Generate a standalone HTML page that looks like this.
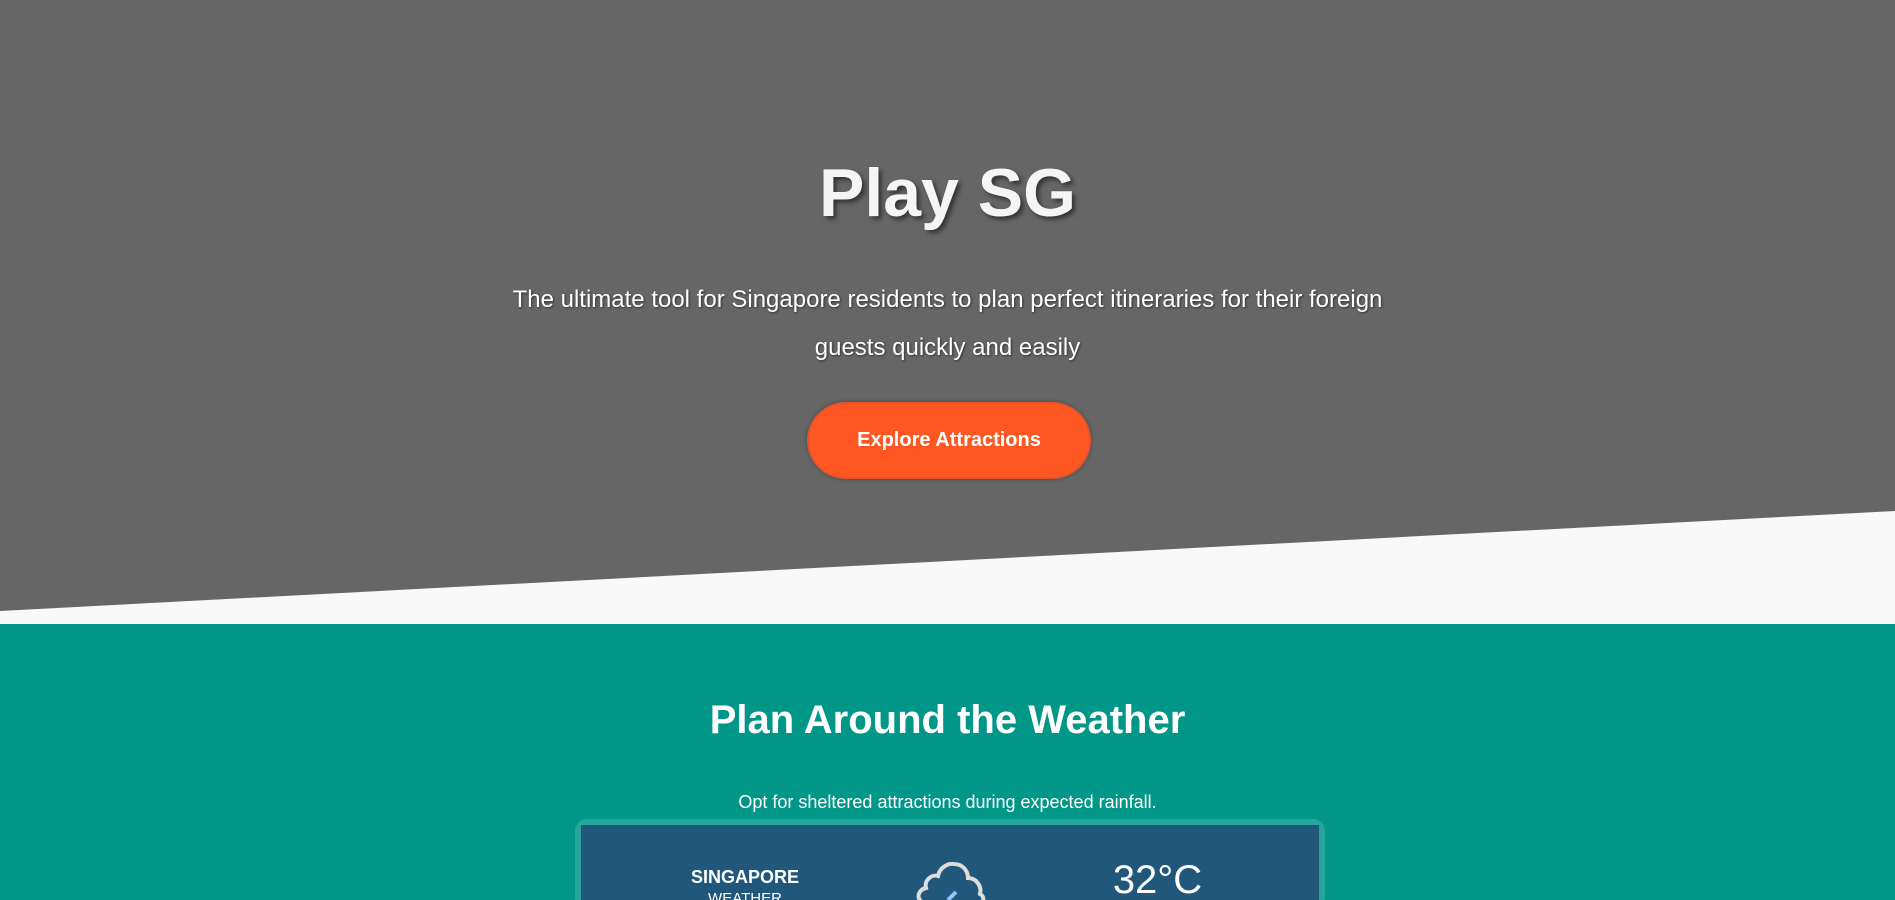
<!DOCTYPE html>
<html><head><meta charset="utf-8"><style>
*{margin:0;padding:0;box-sizing:border-box}
html,body{width:1895px;height:900px;overflow:hidden;background:#f9f9f9;font-family:"Segoe UI","Liberation Sans",sans-serif;position:relative}
.hero{position:absolute;left:0;top:0;width:1895px;height:624px}
.hero svg{position:absolute;left:0;top:0}
h1{position:absolute;top:154px;width:100%;text-align:center;color:#f5f5f5;font-size:68px;font-weight:bold;text-shadow:3px 3px 5px rgba(0,0,0,.5)}
.sub{position:absolute;top:276px;left:400px;width:1095px;text-align:center;color:#fff;font-size:24px;line-height:48px;text-shadow:1px 1px 2px rgba(0,0,0,.5)}
.btn{position:absolute;left:807px;top:402px;width:284px;height:77px;border-radius:39px;background:#ff5722;border:2px solid #e0552f;box-shadow:0 0 4px rgba(0,0,0,.3);color:#fff;font-weight:bold;font-size:20px;line-height:73px;text-align:center}
.teal{position:absolute;left:0;top:624px;width:1895px;height:276px;background:#009688}
h2{position:absolute;top:698px;width:100%;text-align:center;color:#fff;font-size:40px;font-weight:bold}
.opt{position:absolute;top:792px;width:100%;text-align:center;color:#fff;font-size:18px}
.card{position:absolute;left:575px;top:819px;width:750px;height:90px;border-radius:12px;background:#26a69a}
.inner{position:absolute;left:581px;top:825px;width:738px;height:80px;background:#20577b}
.sg{position:absolute;left:640px;top:866px;width:210px;text-align:center;color:#fff;font-weight:bold;font-size:18px;line-height:22px}
.sg span{display:block;font-weight:normal;font-size:15px}
.temp{position:absolute;left:1080px;top:858px;width:155px;text-align:center;color:#fff;font-size:40px}
</style></head><body>
<div class="hero">
<svg width="1895" height="624"><polygon points="0,0 1895,0 1895,511 0,611" fill="#666"/></svg>
<h1>Play SG</h1>
<div class="sub">The ultimate tool for Singapore residents to plan perfect itineraries for their foreign<br>guests quickly and easily</div>
<div class="btn">Explore Attractions</div>
</div>
<div class="teal"></div>
<h2>Plan Around the Weather</h2>
<div class="opt">Opt for sheltered attractions during expected rainfall.</div>
<div class="card"></div>
<div class="inner"></div>
<div class="sg">SINGAPORE<span>WEATHER</span></div>
<svg style="position:absolute;left:912px;top:862px" width="80" height="38"><path d="M10,40 C4,36 6,28 14,26 C12,18 20,12 26,14 C28,4 38,1 42,2 C50,2 56,8 56,16 C64,16 70,24 68,32 C72,34 72,38 70,40" fill="none" stroke="#ddd" stroke-width="4"/><path d="M36,38 L44,30" stroke="#8ec5ff" stroke-width="4"/></svg>
<div class="temp">32°C</div>
</body></html>
